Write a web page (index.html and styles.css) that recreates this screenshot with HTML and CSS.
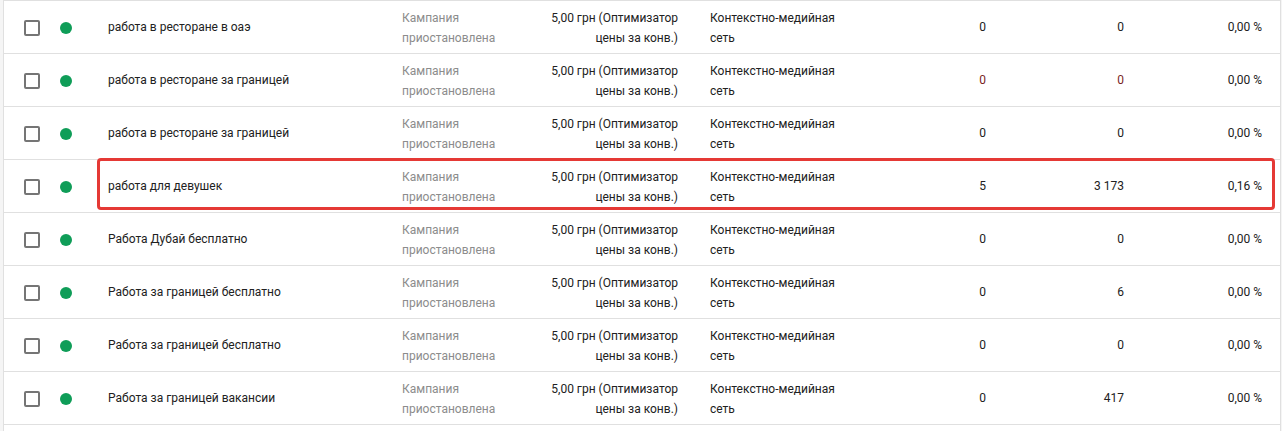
FILE: index.html
```html
<!DOCTYPE html>
<html lang="ru">
<head>
<meta charset="utf-8">
<link rel="stylesheet" href="styles.css">
</head>
<body>
<div class="table">
  <div class="row">
    <div class="c-check"><span class="box"></span></div>
    <div class="c-dot"><span class="dot"></span></div>
    <div class="c-name">работа в ресторане в оаэ</div>
    <div class="c-status">Кампания<br>приостановлена</div>
    <div class="c-bid">5,00 грн (Оптимизатор<br>цены за конв.)</div>
    <div class="c-net">Контекстно-медийная<br>сеть</div>
    <div class="c-num1">0</div>
    <div class="c-num2">0</div>
    <div class="c-num3">0,00 %</div>
  </div>
  <div class="row">
    <div class="c-check"><span class="box"></span></div>
    <div class="c-dot"><span class="dot"></span></div>
    <div class="c-name">работа в ресторане за границей</div>
    <div class="c-status">Кампания<br>приостановлена</div>
    <div class="c-bid">5,00 грн (Оптимизатор<br>цены за конв.)</div>
    <div class="c-net">Контекстно-медийная<br>сеть</div>
    <div class="c-num1 warn">0</div>
    <div class="c-num2 warn">0</div>
    <div class="c-num3">0,00 %</div>
  </div>
  <div class="row">
    <div class="c-check"><span class="box"></span></div>
    <div class="c-dot"><span class="dot"></span></div>
    <div class="c-name">работа в ресторане за границей</div>
    <div class="c-status">Кампания<br>приостановлена</div>
    <div class="c-bid">5,00 грн (Оптимизатор<br>цены за конв.)</div>
    <div class="c-net">Контекстно-медийная<br>сеть</div>
    <div class="c-num1">0</div>
    <div class="c-num2">0</div>
    <div class="c-num3">0,00 %</div>
  </div>
  <div class="row highlighted">
    <div class="c-check"><span class="box"></span></div>
    <div class="c-dot"><span class="dot"></span></div>
    <div class="c-name">работа для девушек</div>
    <div class="c-status">Кампания<br>приостановлена</div>
    <div class="c-bid">5,00 грн (Оптимизатор<br>цены за конв.)</div>
    <div class="c-net">Контекстно-медийная<br>сеть</div>
    <div class="c-num1">5</div>
    <div class="c-num2">3 173</div>
    <div class="c-num3">0,16 %</div>
    <div class="mark"></div>
  </div>
  <div class="row">
    <div class="c-check"><span class="box"></span></div>
    <div class="c-dot"><span class="dot"></span></div>
    <div class="c-name">Работа Дубай бесплатно</div>
    <div class="c-status">Кампания<br>приостановлена</div>
    <div class="c-bid">5,00 грн (Оптимизатор<br>цены за конв.)</div>
    <div class="c-net">Контекстно-медийная<br>сеть</div>
    <div class="c-num1">0</div>
    <div class="c-num2">0</div>
    <div class="c-num3">0,00 %</div>
  </div>
  <div class="row">
    <div class="c-check"><span class="box"></span></div>
    <div class="c-dot"><span class="dot"></span></div>
    <div class="c-name">Работа за границей бесплатно</div>
    <div class="c-status">Кампания<br>приостановлена</div>
    <div class="c-bid">5,00 грн (Оптимизатор<br>цены за конв.)</div>
    <div class="c-net">Контекстно-медийная<br>сеть</div>
    <div class="c-num1">0</div>
    <div class="c-num2">6</div>
    <div class="c-num3">0,00 %</div>
  </div>
  <div class="row">
    <div class="c-check"><span class="box"></span></div>
    <div class="c-dot"><span class="dot"></span></div>
    <div class="c-name">Работа за границей бесплатно</div>
    <div class="c-status">Кампания<br>приостановлена</div>
    <div class="c-bid">5,00 грн (Оптимизатор<br>цены за конв.)</div>
    <div class="c-net">Контекстно-медийная<br>сеть</div>
    <div class="c-num1">0</div>
    <div class="c-num2">0</div>
    <div class="c-num3">0,00 %</div>
  </div>
  <div class="row">
    <div class="c-check"><span class="box"></span></div>
    <div class="c-dot"><span class="dot"></span></div>
    <div class="c-name">Работа за границей вакансии</div>
    <div class="c-status">Кампания<br>приостановлена</div>
    <div class="c-bid">5,00 грн (Оптимизатор<br>цены за конв.)</div>
    <div class="c-net">Контекстно-медийная<br>сеть</div>
    <div class="c-num1">0</div>
    <div class="c-num2">417</div>
    <div class="c-num3">0,00 %</div>
  </div>
  <div class="row empty"></div>
</div>
</body>
</html>
```
FILE: styles.css
```css
html, body {
  margin: 0;
  padding: 0;
  background: #f5f5f5;
  overflow: hidden;
}
body {
  font-family: Roboto, "Noto Sans", "Liberation Sans", sans-serif;
  font-size: 12px;
  color: #212121;
}
.table {
  margin-left: 3px;
  width: 1276px;
  background: #fff;
  border-left: 1px solid #e0e0e0;
  border-right: 1px solid #e0e0e0;
  border-top: 1px solid #e0e0e0;
}
.row {
  position: relative;
  display: grid;
  grid-template-columns: 44px 44px 294px 134px 174px 156px 152px 138px 140px;
  align-items: center;
  height: 52px;
  border-bottom: 1px solid #e0e0e0;
  line-height: 20px;
}
.row.empty {
  height: 40px;
  border-bottom: none;
}
.c-check {
  padding-left: 20px;
  display: flex;
  align-items: center;
}
.box {
  display: block;
  width: 12px;
  height: 12px;
  border: 2px solid #757575;
  border-radius: 2px;
  margin-top: 1px;
}
.c-dot {
  padding-left: 12px;
  display: flex;
  align-items: center;
}
.dot {
  display: block;
  width: 12px;
  height: 12px;
  border-radius: 50%;
  background: #0f9d58;
  margin-top: 1px;
}
.c-name {
  padding-left: 16px;
  white-space: nowrap;
}
.c-status {
  padding-left: 16px;
  color: #8c8c8c;
  white-space: nowrap;
  padding-top: 1px;
}
.c-bid {
  padding-right: 16px;
  text-align: right;
  white-space: nowrap;
  padding-top: 1px;
}
.c-net {
  padding-left: 16px;
  white-space: nowrap;
  padding-top: 1px;
}
.c-num1, .c-num2 {
  padding-right: 16px;
  text-align: right;
}
.c-num3 {
  padding-right: 18px;
  text-align: right;
}
.warn {
  color: #7a1f1f;
}
.mark {
  position: absolute;
  left: 93px;
  top: -2px;
  width: 1172px;
  height: 46px;
  border: 3px solid #e53935;
  border-radius: 4px;
  pointer-events: none;
}
```
